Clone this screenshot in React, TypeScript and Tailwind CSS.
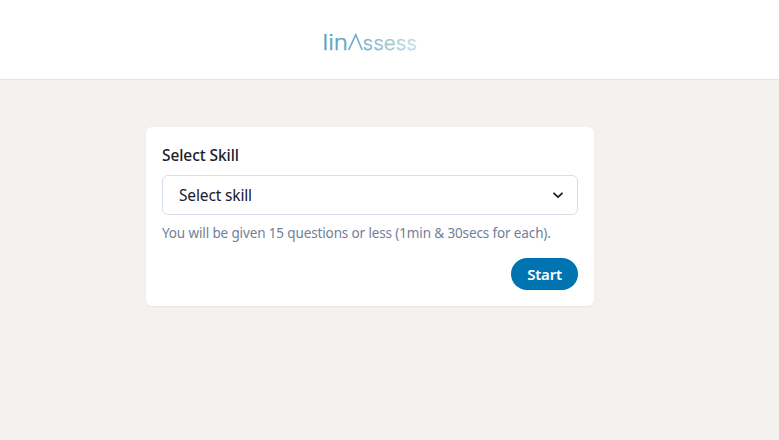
function Logo() {
  return (
    <svg
      width="104"
      height="36"
      viewBox="0 0 104 36"
      role="img"
      aria-label="linAssess"
      className="overflow-visible font-['Inter',sans-serif] font-light"
    >
      <defs>
        <linearGradient id="brand" gradientUnits="userSpaceOnUse" x1="4" y1="0" x2="100" y2="0">
          <stop offset="0" stopColor="#4b9fc6" />
          <stop offset="0.35" stopColor="#6eabc4" />
          <stop offset="0.65" stopColor="#95c3d0" />
          <stop offset="1" stopColor="#c3dfe6" />
        </linearGradient>
      </defs>
      <g fill="url(#brand)" stroke="url(#brand)" strokeWidth="0.25" fontSize="21">
        <text x="4.5" y="26" textLength="25.5" lengthAdjust="spacingAndGlyphs">lin</text>
        <text x="44.5" y="26" fontSize="20" textLength="54.5" lengthAdjust="spacingAndGlyphs">ssess</text>
      </g>
      <path d="M30.7 26 L37.7 10.8 L44.2 26" fill="none" stroke="url(#brand)" strokeWidth="1.6" />
    </svg>
  );
}

export default function App() {
  return (
    <div className="min-h-screen bg-[#f3f2ee] font-['Noto_Sans',sans-serif] text-[#1a202c]">
      <header className="flex h-20 items-center justify-center border-b border-[#e5e4e1] bg-white pt-1 pr-[39px]">
        <Logo />
      </header>
      <main className="pt-[47px] pl-[146px]">
        <section className="flex h-[179px] w-[448px] flex-col rounded-md bg-white px-4 pt-4 pb-4 shadow-xs">
          <label className="mb-2 h-6 text-[15.5px] leading-[25px] font-medium tracking-[-0.08px] whitespace-nowrap">
            Select Skill
          </label>
          <button className="flex h-10 shrink-0 items-center justify-between rounded-md border border-[#d5dfe9] pr-3 pl-4 text-[15.5px] tracking-[-0.15px]">
            <span className="pt-0.5">Select skill</span>
            <svg width="14" height="14" viewBox="0 0 14 14" fill="none" stroke="currentColor" strokeWidth="1.8" strokeLinecap="round" strokeLinejoin="round">
              <path d="M3 5.3 L7 9.2 L11 5.3" />
            </svg>
          </button>
          <p className="mt-2 h-5 text-[13.5px] leading-5 tracking-[-0.13px] whitespace-nowrap text-[#718096]">
            You will be given 15 questions or less (1min &amp; 30secs for each).
          </p>
          <button className="mt-auto h-8 w-[67px] self-end rounded-full bg-[#0073b1] text-[15px] font-semibold tracking-[-0.2px] text-white">
            Start
          </button>
        </section>
      </main>
    </div>
  );
}
